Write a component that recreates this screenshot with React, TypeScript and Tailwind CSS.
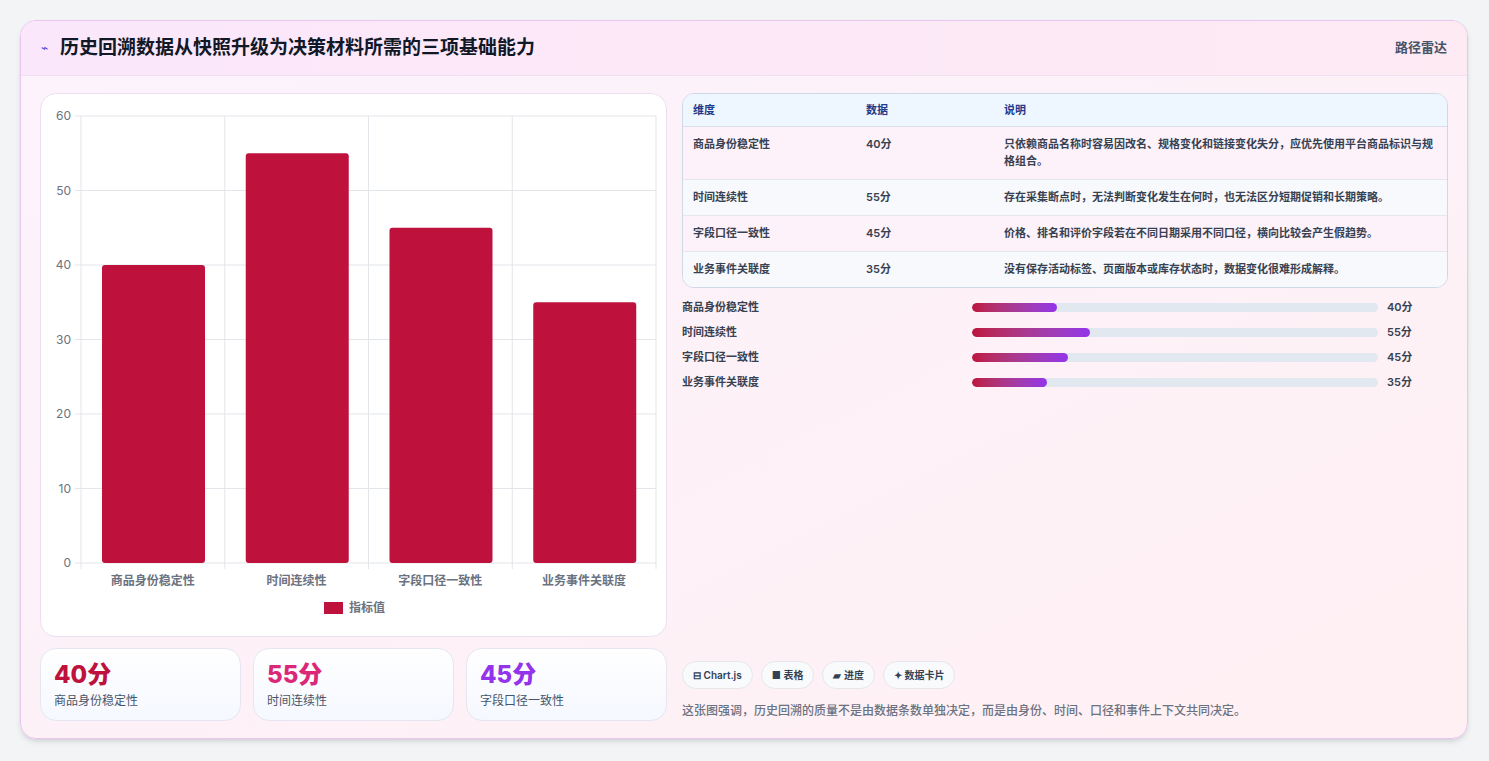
import React from 'react';

const rows = [
  { name: '商品身份稳定性', v: 40, desc: '只依赖商品名称时容易因改名、规格变化和链接变化失分，应优先使用平台商品标识与规格组合。' },
  { name: '时间连续性', v: 55, desc: '存在采集断点时，无法判断变化发生在何时，也无法区分短期促销和长期策略。' },
  { name: '字段口径一致性', v: 45, desc: '价格、排名和评价字段若在不同日期采用不同口径，横向比较会产生假趋势。' },
  { name: '业务事件关联度', v: 35, desc: '没有保存活动标签、页面版本或库存状态时，数据变化很难形成解释。' },
];

function Chart() {
  // plot area in svg coords (card origin at 40,93)
  const top = 22, bottom = 469, left = 40, right = 615;
  const y = (v: number) => bottom - ((bottom - top) * v) / 60;
  const colW = (right - left) / 4;
  return (
    <svg width="627" height="543" className="block">
      {[0, 10, 20, 30, 40, 50, 60].map((t) => (
        <g key={t}>
          <line x1={left - 6} x2={right} y1={y(t)} y2={y(t)} stroke="#e2e5ea" />
          <text x={left - 10} y={y(t) + 4} textAnchor="end" fontSize="12" fill="#6b7280">{t}</text>
        </g>
      ))}
      {[0, 1, 2, 3, 4].map((i) => (
        <line key={i} x1={left + colW * i} x2={left + colW * i} y1={top} y2={bottom + 6} stroke="#e2e5ea" />
      ))}
      {rows.map((r, i) => (
        <g key={r.name}>
          <rect x={left + colW * i + 21} y={y(r.v)} width={103} height={bottom - y(r.v)} rx="3" fill="#be123c" />
          <text x={left + colW * i + colW / 2} y={491} textAnchor="middle" fontSize="12" fontWeight="600" fill="#6b7280">{r.name}</text>
        </g>
      ))}
      <rect x="283" y="508" width="19" height="12" fill="#be123c" />
      <text x="308" y="518" fontSize="12" fontWeight="600" fill="#6b7280">指标值</text>
    </svg>
  );
}

export default function App() {
  return (
    <div className="w-[1489px] h-[761px] bg-[#f3f4f6] p-5 pb-0" style={{ fontFamily: 'Inter, "Noto Sans CJK SC", sans-serif' }}>
      <div className="w-[1448px] h-[719px] rounded-2xl border border-[#e9c6f0] overflow-hidden bg-gradient-to-br from-[#fcf3fd] to-[#fff0f3] shadow-md flex flex-col">
        <div className="h-[55px] flex items-center justify-between px-5 bg-gradient-to-r from-[#fbe7fb] to-[#fdeaf3] border-b border-[#f1dff2]">
          <div className="flex items-center gap-3">
            <span className="text-[#4f46e5] text-xs">⌁</span>
            <span className="text-[19px] font-bold text-[#111827]">历史回溯数据从快照升级为决策材料所需的三项基础能力</span>
          </div>
          <span className="text-[13px] font-semibold text-[#475569]">路径雷达</span>
        </div>
        <div className="flex-1 flex gap-[15px] px-[19px] pt-[17px]">
          <div className="w-[627px] flex flex-col gap-[11px]">
            <div className="h-[544px] bg-white rounded-2xl border border-[#ecdff0]">
              <Chart />
            </div>
            <div className="flex gap-3">
              {[
                ['40分', '商品身份稳定性', 'text-[#be123c]'],
                ['55分', '时间连续性', 'text-[#db2777]'],
                ['45分', '字段口径一致性', 'text-[#9333ea]'],
              ].map(([v, l, c]) => (
                <div key={l} className="w-[201px] h-[73px] rounded-2xl border border-[#e5e7f0] bg-gradient-to-b from-white to-[#f5f8ff] px-[13px] pt-[10px]">
                  <div className={`text-[24px] font-extrabold leading-8 ${c}`}>{v}</div>
                  <div className="text-xs text-[#475569] mt-0.5">{l}</div>
                </div>
              ))}
            </div>
          </div>
          <div className="flex-1 flex flex-col">
            <div className="rounded-xl border border-[#cfd8e6] overflow-hidden text-[11px] font-semibold text-[#374151]">
              <div className="flex h-[33px] items-center bg-[#eef6ff] text-[#1e3a8a] border-b border-[#d8dfeb]">
                <div className="w-[183px] pl-[10px]">维度</div>
                <div className="w-[138px]">数据</div>
                <div className="flex-1">说明</div>
              </div>
              {rows.map((r, i) => (
                <div key={r.name} className={`flex py-[9px] ${i % 2 ? 'bg-[#f7f9fc]' : 'bg-[#fdf2fa]'} ${i < 3 ? 'border-b border-[#e5e7eb]' : ''}`}>
                  <div className="w-[183px] pl-[10px] leading-[17px]">{r.name}</div>
                  <div className="w-[138px] leading-[17px]">{r.v}分</div>
                  <div className="flex-1 pr-3 leading-[17px]">{r.desc}</div>
                </div>
              ))}
            </div>
            <div className="flex flex-col gap-[11px] mt-3">
              {rows.map((r) => (
                <div key={r.name} className="flex items-center h-[14px] text-[11px] font-semibold text-[#374151]">
                  <div className="w-[290px]">{r.name}</div>
                  <div className="w-[406px] h-[9px] rounded-full bg-[#e2e8f0] overflow-hidden">
                    <div className="h-full rounded-full bg-gradient-to-r from-[#be123c] to-[#9333ea]" style={{ width: `${(r.v / 190) * 100}%` }} />
                  </div>
                  <div className="ml-[9px]">{r.v}分</div>
                </div>
              ))}
            </div>
            <div className="mt-auto mb-[18px]">
              <div className="flex gap-2 mb-[13px]">
                {['⊟ Chart.js', '■ 表格', '▰ 进度', '✦ 数据卡片'].map((t) => (
                  <span key={t} className="h-[28px] px-[10px] flex items-center rounded-full border border-[#e5e7eb] bg-[#f8fafc] text-[10px] font-semibold text-[#334155]">{t}</span>
                ))}
              </div>
              <div className="text-[12px] font-medium text-[#6b7280]">这张图强调，历史回溯的质量不是由数据条数单独决定，而是由身份、时间、口径和事件上下文共同决定。</div>
            </div>
          </div>
        </div>
      </div>
    </div>
  );
}
